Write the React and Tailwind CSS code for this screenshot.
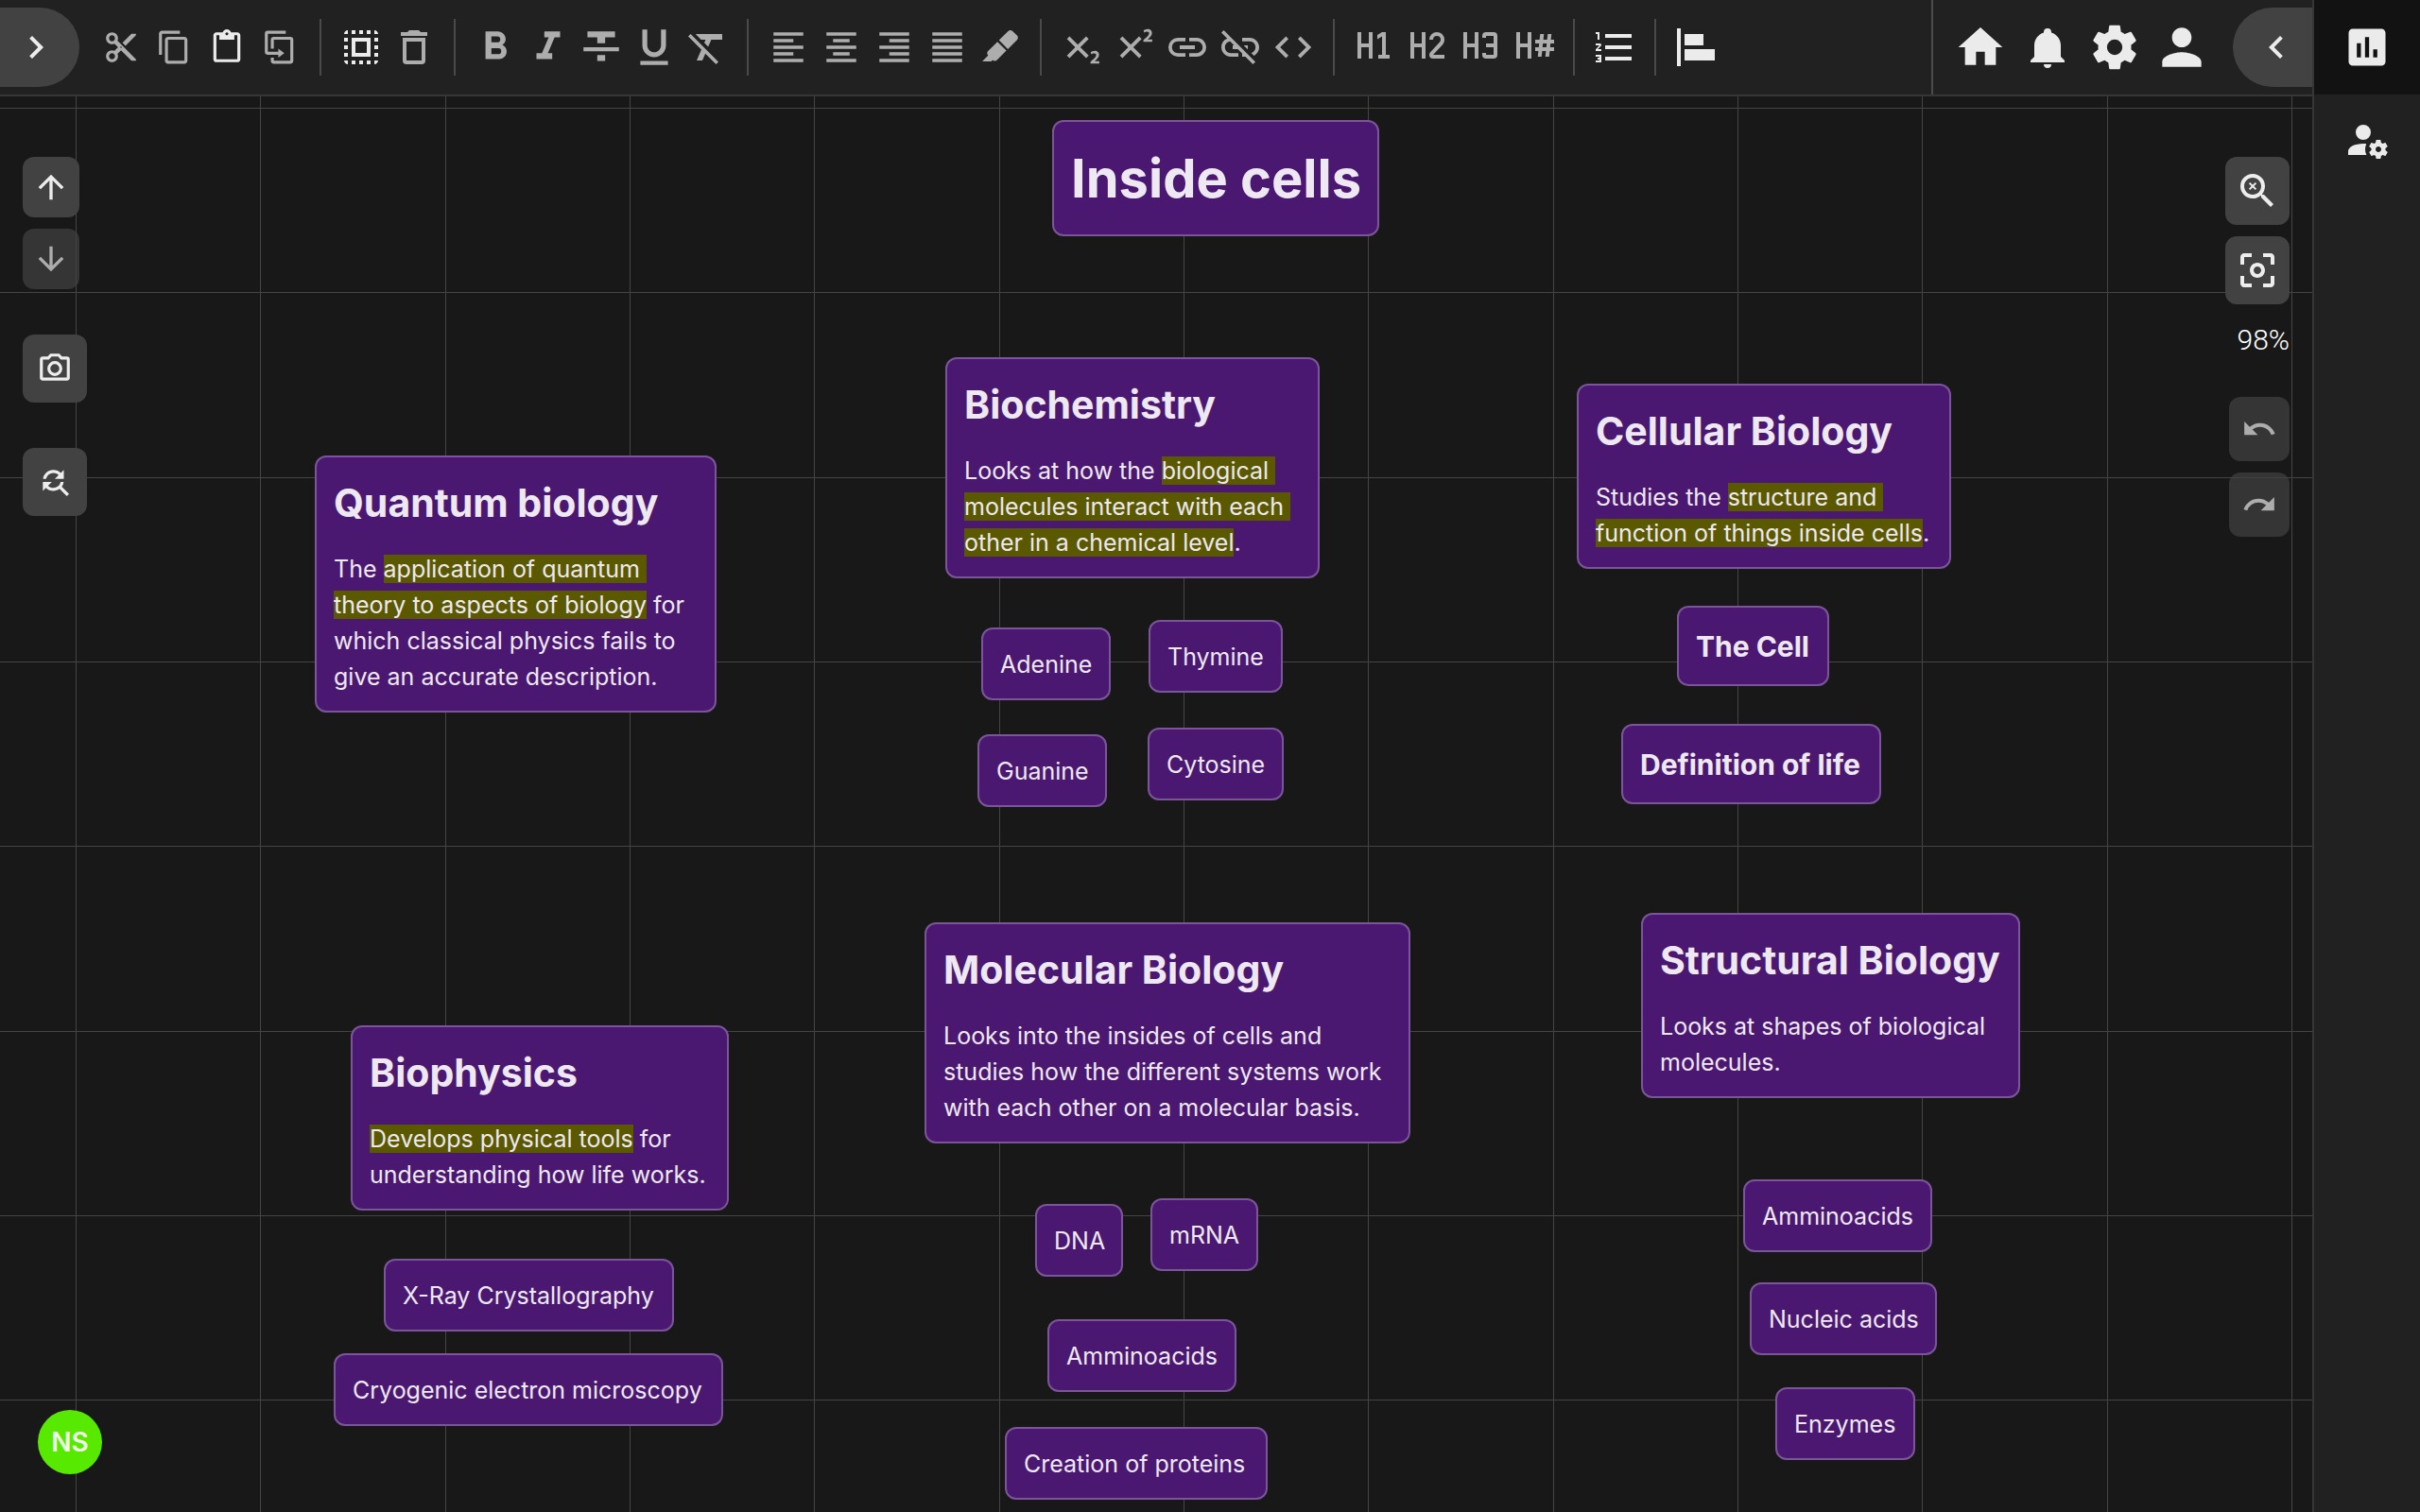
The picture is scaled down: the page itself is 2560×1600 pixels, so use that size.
import React from "react";
import {
  MdArrowDownward,
  MdArrowUpward,
  MdAssessment,
  MdCenterFocusWeak,
  MdContentCopy,
  MdContentCut,
  MdContentPaste,
  MdFindReplace,
  MdFormatAlignCenter,
  MdFormatAlignJustify,
  MdFormatAlignLeft,
  MdFormatAlignRight,
  MdFormatClear,
  MdFormatItalic,
  MdFormatStrikethrough,
  MdFormatUnderlined,
  MdLinkOff,
  MdPerson,
  MdRedo,
  MdSelectAll,
  MdUndo,
} from "react-icons/md";

function glyph(d) {
  return function Glyph({ className }) {
    return (
      <svg viewBox="0 0 24 24" fill="currentColor" className={className} aria-hidden="true">
        <path d={d} />
      </svg>
    );
  };
}

const HEADER_H = "M3,4H5V10H9V4H11V18H9V12H5V18H3V4";
const SCRIPT_X =
  "M16,7.41L11.41,12L16,16.59L14.59,18L10,13.41L5.41,18L4,16.59L8.59,12L4,7.41L5.41,6L10,10.59L14.59,6L16,7.41";
const SCRIPT_TWO =
  "M21.85,21.03H16.97V20.03L17.86,19.23C18.62,18.58 19.18,18.04 19.56,17.6C19.93,17.16 20.12,16.75 20.13,16.36C20.14,16.08 20.05,15.85 19.86,15.66C19.68,15.5 19.39,15.38 19,15.38C18.69,15.38 18.42,15.44 18.16,15.56L17.5,15.94L17.05,14.77C17.32,14.56 17.64,14.38 18.03,14.24C18.42,14.1 18.85,14 19.32,14C20.1,14.04 20.7,14.25 21.1,14.66C21.5,15.07 21.72,15.59 21.72,16.23C21.71,16.79 21.53,17.31 21.18,17.78C20.84,18.25 20.42,18.7 19.91,19.14L19.27,19.66V19.68H21.85V21.03Z";

const ChevronRight = glyph("M8.59,16.58L13.17,12L8.59,7.41L10,6L16,12L10,18L8.59,16.58Z");
const ChevronLeft = glyph("M15.41,16.58L10.83,12L15.41,7.41L14,6L8,12L14,18L15.41,16.58Z");
const Duplicate = glyph(
  "M11,17H4A2,2 0 0,1 2,15V3A2,2 0 0,1 4,1H16V3H4V15H11V13L15,16L11,19V17M19,21V7H8V13H6V7A2,2 0 0,1 8,5H19A2,2 0 0,1 21,7V21A2,2 0 0,1 19,23H8A2,2 0 0,1 6,21V19H8V21H19Z"
);
const Trash = glyph(
  "M6,19A2,2 0 0,0 8,21H16A2,2 0 0,0 18,19V7H6V19M8,9H16V19H8V9M15.5,4L14.5,3H9.5L8.5,4H5V6H19V4H15.5Z"
);
const Bold = glyph(
  "M13.5,15.5H10V12.5H13.5A1.5,1.5 0 0,1 15,14A1.5,1.5 0 0,1 13.5,15.5M10,6.5H13A1.5,1.5 0 0,1 14.5,8A1.5,1.5 0 0,1 13,9.5H10M15.6,10.79C16.57,10.11 17.25,9 17.25,8C17.25,5.74 15.5,4 13.25,4H7V18H14.04C16.14,18 17.75,16.3 17.75,14.21C17.75,12.69 16.89,11.39 15.6,10.79Z"
);
const Marker = glyph(
  "M18.5,1.15C17.97,1.15 17.46,1.34 17.07,1.73L11.26,7.55L16.91,13.2L22.73,7.39C23.5,6.61 23.5,5.35 22.73,4.56L19.89,1.73C19.5,1.34 19,1.15 18.5,1.15M10.3,8.5L4.34,14.46C3.56,15.24 3.56,16.5 4.36,17.31C3.14,18.54 1.9,19.77 0.67,21H6.33L7.19,20.14C7.97,20.9 9.22,20.89 10,20.12L15.95,14.16"
);
const Subscript = glyph(SCRIPT_X + SCRIPT_TWO);
function Superscript({ className }) {
  return (
    <svg viewBox="0 0 24 24" fill="currentColor" className={className} aria-hidden="true">
      <path d={SCRIPT_X} />
      <path d={SCRIPT_TWO} transform="translate(0 -12)" />
    </svg>
  );
}
const Link = glyph(
  "M3.9,12C3.9,10.29 5.29,8.9 7,8.9H11V7H7A5,5 0 0,0 2,12A5,5 0 0,0 7,17H11V15.1H7C5.29,15.1 3.9,13.71 3.9,12M8,13H16V11H8V13M17,7H13V8.9H17C18.71,8.9 20.1,10.29 20.1,12C20.1,13.71 18.71,15.1 17,15.1H13V17H17A5,5 0 0,0 22,12A5,5 0 0,0 17,7Z"
);
const Code = glyph(
  "M14.6,16.6L19.2,12L14.6,7.4L16,6L22,12L16,18L14.6,16.6M9.4,16.6L4.8,12L9.4,7.4L8,6L2,12L8,18L9.4,16.6Z"
);
const Header1 = glyph(HEADER_H + "M14,18V16H16V6.31L13.5,7.75V5.44L16,4H18V16H20V18H14Z");
const Header2 = glyph(
  HEADER_H +
    "M21,18H15A2,2 0 0,1 13,16C13,15.47 13.2,15 13.54,14.64L18.41,9.41C18.78,9.05 19,8.55 19,8A2,2 0 0,0 17,6A2,2 0 0,0 15,8H13A4,4 0 0,1 17,4A4,4 0 0,1 21,8C21,9.1 20.55,10.1 19.83,10.83L15,16H21V18Z"
);
const Header3 = glyph(
  HEADER_H +
    "M15,4H19A2,2 0 0,1 21,6V16A2,2 0 0,1 19,18H15A2,2 0 0,1 13,16V15H15V16H19V12H15V10H19V6H15V7H13V6A2,2 0 0,1 15,4Z"
);
const HeaderPound = glyph(
  HEADER_H +
    "M13,8H15.31L15.63,5H17.63L17.31,8H19.31L19.63,5H21.63L21.31,8H23V10H21.1L20.9,12H23V14H20.69L20.37,17H18.37L18.69,14H16.69L16.37,17H14.37L14.69,14H13V12H14.9L15.1,10H13V8M17.1,10L16.9,12H18.9L19.1,10H17.1Z"
);
const ListNumbered = glyph(
  "M7,13V11H21V13H7M7,19V17H21V19H7M7,7V5H21V7H7M3,8V5H2V4H4V8H3M2,17V16H5V20H2V19H4V18.5H3V17.5H4V17H2M4.25,10A0.75,0.75 0 0,1 5,10.75C5,10.95 4.92,11.14 4.79,11.27L3.12,13H5V14H2V13.08L4,11H2V10H4.25Z"
);
const AlignNodes = glyph("M2,2H4V22H2V2M6,5H16V11H6V5M6,13H22V19H6V13Z");
const Home = glyph("M10,20V14H14V20H19V12H22L12,3L2,12H5V20H10Z");
const Bell = glyph(
  "M21,19V20H3V19L5,17V11C5,7.9 7.03,5.17 10,4.29C10,4.19 10,4.1 10,4A2,2 0 0,1 12,2A2,2 0 0,1 14,4C14,4.1 14,4.19 14,4.29C16.97,5.17 19,7.9 19,11V17L21,19M14,21A2,2 0 0,1 12,23A2,2 0 0,1 10,21"
);
const Cog = glyph(
  "M12,15.5A3.5,3.5 0 0,1 8.5,12A3.5,3.5 0 0,1 12,8.5A3.5,3.5 0 0,1 15.5,12A3.5,3.5 0 0,1 12,15.5M19.43,12.97C19.47,12.65 19.5,12.33 19.5,12C19.5,11.67 19.47,11.34 19.43,11L21.54,9.37C21.73,9.22 21.78,8.95 21.66,8.73L19.66,5.27C19.54,5.05 19.27,4.96 19.05,5.05L16.56,6.05C16.04,5.66 15.5,5.32 14.87,5.07L14.5,2.42C14.46,2.18 14.25,2 14,2H10C9.75,2 9.54,2.18 9.5,2.42L9.13,5.07C8.5,5.32 7.96,5.66 7.44,6.05L4.95,5.05C4.73,4.96 4.46,5.05 4.34,5.27L2.34,8.73C2.21,8.95 2.27,9.22 2.46,9.37L4.57,11C4.53,11.34 4.5,11.67 4.5,12C4.5,12.33 4.53,12.65 4.57,12.97L2.46,14.63C2.27,14.78 2.21,15.05 2.34,15.27L4.34,18.73C4.46,18.95 4.73,19.03 4.95,18.95L7.44,17.94C7.96,18.34 8.5,18.68 9.13,18.93L9.5,21.58C9.54,21.82 9.75,22 10,22H14C14.25,22 14.46,21.82 14.5,21.58L14.87,18.93C15.5,18.67 16.04,18.34 16.56,17.94L19.05,18.95C19.27,19.03 19.54,18.95 19.66,18.73L21.66,15.27C21.78,15.05 21.73,14.78 21.54,14.63L19.43,12.97Z"
);
const AccountCog = glyph(
  "M10 4A4 4 0 0 0 6 8A4 4 0 0 0 10 12A4 4 0 0 0 14 8A4 4 0 0 0 10 4M17 12C16.87 12 16.76 12.09 16.74 12.21L16.55 13.53C16.25 13.66 15.96 13.82 15.7 14L14.46 13.5C14.35 13.5 14.22 13.5 14.15 13.63L13.15 15.36C13.09 15.47 13.11 15.6 13.21 15.68L14.27 16.5C14.25 16.67 14.24 16.83 14.24 17C14.24 17.17 14.25 17.33 14.27 17.5L13.21 18.32C13.12 18.4 13.09 18.53 13.15 18.64L14.15 20.37C14.21 20.5 14.34 20.5 14.46 20.5L15.7 20C15.96 20.18 16.24 20.35 16.55 20.47L16.74 21.79C16.76 21.91 16.86 22 17 22H19C19.11 22 19.22 21.91 19.24 21.79L19.43 20.47C19.73 20.34 20 20.18 20.27 20L21.5 20.5C21.63 20.5 21.76 20.5 21.83 20.37L22.83 18.64C22.89 18.53 22.86 18.4 22.77 18.32L21.7 17.5C21.72 17.33 21.74 17.17 21.74 17C21.74 16.83 21.73 16.67 21.7 16.5L22.76 15.68C22.85 15.6 22.88 15.47 22.82 15.36L21.82 13.63C21.76 13.5 21.63 13.5 21.5 13.5L20.27 14C20 13.82 19.73 13.65 19.42 13.53L19.23 12.21C19.22 12.09 19.11 12 19 12H17M10 14C5.58 14 2 15.79 2 18V20H11.68A7 7 0 0 1 11 17A7 7 0 0 1 11.64 14.09C11.11 14.03 10.56 14 10 14M18 15.5C18.83 15.5 19.5 16.17 19.5 17C19.5 17.83 18.83 18.5 18 18.5C17.16 18.5 16.5 17.83 16.5 17C16.5 16.17 17.17 15.5 18 15.5Z"
);
const Camera = glyph(
  "M20,4H16.83L15,2H9L7.17,4H4A2,2 0 0,0 2,6V18A2,2 0 0,0 4,20H20A2,2 0 0,0 22,18V6A2,2 0 0,0 20,4M20,18H4V6H8.05L9.88,4H14.12L15.95,6H20V18M12,7A5,5 0 0,0 7,12A5,5 0 0,0 12,17A5,5 0 0,0 17,12A5,5 0 0,0 12,7M12,15A3,3 0 0,1 9,12A3,3 0 0,1 12,9A3,3 0 0,1 15,12A3,3 0 0,1 12,15Z"
);
function ZoomReset({ className }) {
  return (
    <svg viewBox="0 0 24 24" fill="currentColor" className={className} aria-hidden="true">
      <path d="M9.5,3A6.5,6.5 0 0,1 16,9.5C16,11.11 15.41,12.59 14.44,13.73L14.71,14H15.5L20.5,19L19,20.5L14,15.5V14.71L13.73,14.44C12.59,15.41 11.11,16 9.5,16A6.5,6.5 0 0,1 3,9.5A6.5,6.5 0 0,1 9.5,3M9.5,5C7,5 5,7 5,9.5C5,12 7,14 9.5,14C12,14 14,12 14,9.5C14,7 12,5 9.5,5Z" />
      <path d="M7.8,7.8L11.2,11.2M11.2,7.8L7.8,11.2" stroke="currentColor" strokeWidth="1" fill="none" />
    </svg>
  );
}

const TOOL_GROUPS = [
  [
    { label: "Cut", Icon: MdContentCut, size: "size-[38px]" },
    { label: "Copy", Icon: MdContentCopy, size: "size-[38px]" },
    { label: "Paste", Icon: MdContentPaste, size: "size-[38px]", active: true },
    { label: "Duplicate", Icon: Duplicate, size: "size-[38px]" },
  ],
  [
    { label: "Select all", Icon: MdSelectAll, size: "size-12", active: true },
    { label: "Delete", Icon: Trash, size: "size-12" },
  ],
  [
    { label: "Bold", Icon: Bold, size: "size-[50px]" },
    { label: "Italic", Icon: MdFormatItalic, size: "size-[50px]" },
    { label: "Strikethrough", Icon: MdFormatStrikethrough, size: "size-[50px]" },
    { label: "Underline", Icon: MdFormatUnderlined, size: "size-[50px]" },
    { label: "Clear formatting", Icon: MdFormatClear, size: "size-12" },
  ],
  [
    { label: "Align left", Icon: MdFormatAlignLeft, size: "size-[42px]" },
    { label: "Align center", Icon: MdFormatAlignCenter, size: "size-[42px]" },
    { label: "Align right", Icon: MdFormatAlignRight, size: "size-[42px]" },
    { label: "Justify", Icon: MdFormatAlignJustify, size: "size-[42px]" },
    { label: "Highlight", Icon: Marker, size: "size-10" },
  ],
  [
    { label: "Subscript", Icon: Subscript, size: "size-[46px]" },
    { label: "Superscript", Icon: Superscript, size: "size-[46px]" },
    { label: "Link", Icon: Link, size: "size-12" },
    { label: "Remove link", Icon: MdLinkOff, size: "size-12" },
    { label: "Code", Icon: Code, size: "size-[46px]" },
  ],
  [
    { label: "Heading 1", Icon: Header1, size: "size-12" },
    { label: "Heading 2", Icon: Header2, size: "size-12" },
    { label: "Heading 3", Icon: Header3, size: "size-12" },
    { label: "Other headings", Icon: HeaderPound, size: "size-12" },
  ],
  [{ label: "Numbered list", Icon: ListNumbered, size: "size-12", active: true }],
  [{ label: "Align nodes", Icon: AlignNodes, size: "size-12", active: true }],
];

const ACCOUNT_TOOLS = [
  { label: "Home", Icon: Home, size: "size-14" },
  { label: "Notifications", Icon: Bell, size: "size-12" },
  { label: "Settings", Icon: Cog, size: "size-14" },
  { label: "Account", Icon: MdPerson, size: "size-[62px]" },
];

/* Highlighted runs are wrapped in [brackets]; line breaks are kept. */
const NODES = [
  { x: 1113, y: 25, w: 346, h1: "Inside cells" },
  {
    x: 333,
    y: 380,
    w: 425,
    h2: "Quantum biology",
    body: "The [application of quantum ]\n[theory to aspects of biology] for\nwhich classical physics fails to\ngive an accurate description.",
  },
  {
    x: 1000,
    y: 276,
    w: 396,
    h2: "Biochemistry",
    body: "Looks at how the [biological ]\n[molecules interact with each ]\n[other in a chemical level].",
  },
  { x: 1038, y: 562, w: 137, body: "Adenine" },
  { x: 1215, y: 554, w: 142, body: "Thymine" },
  { x: 1034, y: 675, w: 137, body: "Guanine" },
  { x: 1214, y: 668, w: 144, body: "Cytosine" },
  {
    x: 1668,
    y: 304,
    w: 396,
    h2: "Cellular Biology",
    body: "Studies the [structure and ]\n[function of things inside cells].",
  },
  { x: 1774, y: 539, w: 161, h3: "The Cell" },
  { x: 1715, y: 664, w: 275, h3: "Definition of life" },
  {
    x: 371,
    y: 983,
    w: 400,
    h2: "Biophysics",
    body: "[Develops physical tools] for\nunderstanding how life works.",
  },
  { x: 406, y: 1230, w: 307, body: "X-Ray Crystallography" },
  { x: 353, y: 1330, w: 412, body: "Cryogenic electron microscopy" },
  {
    x: 978,
    y: 874,
    w: 514,
    h2: "Molecular Biology",
    body: "Looks into the insides of cells and\nstudies how the different systems work\nwith each other on a molecular basis.",
  },
  { x: 1095, y: 1172, w: 93, body: "DNA" },
  { x: 1217, y: 1166, w: 114, body: "mRNA" },
  { x: 1108, y: 1294, w: 200, body: "Amminoacids" },
  { x: 1063, y: 1408, w: 278, body: "Creation of proteins" },
  {
    x: 1736,
    y: 864,
    w: 401,
    h2: "Structural Biology",
    body: "Looks at shapes of biological\nmolecules.",
  },
  { x: 1844, y: 1146, w: 200, body: "Amminoacids" },
  { x: 1851, y: 1255, w: 198, body: "Nucleic acids" },
  { x: 1878, y: 1366, w: 148, body: "Enzymes" },
];

const GRID_COLUMNS = Array.from({ length: 13 }, (_, i) => Math.round(80 + (i * 586) / 3));
const GRID_ROWS = Array.from({ length: 8 }, (_, i) => Math.round(12 + (i * 586) / 3));

function Body({ text }) {
  const parts = text.split(/(\[[^\]]*\])/);
  return (
    <p className="text-[25px] leading-[38px] whitespace-pre">
      {parts.map((part, i) =>
        part.startsWith("[") ? (
          <mark key={i} className="bg-[#5a5900] text-inherit">
            {part.slice(1, -1)}
          </mark>
        ) : (
          part
        )
      )}
    </p>
  );
}

function Node({ node }) {
  return (
    <article
      className="absolute rounded-xl border-2 border-[#7b5599] bg-[#4b1871] px-[18px] pt-[18px] pb-[17px] text-[#eee8f2]"
      style={{ left: node.x, top: node.y, width: node.w }}
    >
      {node.h1 && <h1 className="text-[56px] leading-[84px] font-bold whitespace-nowrap">{node.h1}</h1>}
      {node.h2 && <h2 className="mb-5 text-[41px] leading-[61px] font-bold whitespace-nowrap">{node.h2}</h2>}
      {node.h3 && <h3 className="text-[30px] leading-[46px] font-bold whitespace-nowrap">{node.h3}</h3>}
      {node.body && <Body text={node.body} />}
    </article>
  );
}

function ToolButton({ tool }) {
  const { Icon, label, size, active } = tool;
  return (
    <button
      type="button"
      aria-label={label}
      className={
        active
          ? "flex h-full w-14 items-center justify-center text-[#ebebeb]"
          : "flex h-full w-14 items-center justify-center text-[#adadad]"
      }
    >
      <Icon className={size} />
    </button>
  );
}

function CanvasButton({ label, Icon, box, size, disabled }) {
  return (
    <button
      type="button"
      aria-label={label}
      disabled={disabled}
      className={
        "flex items-center justify-center rounded-xl text-[#ededed] bg-[#424242] disabled:opacity-70 " + box
      }
    >
      <Icon className={size} />
    </button>
  );
}

export default function App() {
  return (
    <div className="flex h-screen overflow-hidden bg-[#181818] font-[Inter,sans-serif]">
      <main className="flex min-w-0 flex-1 flex-col">
        <header className="flex h-[102px] shrink-0 items-center border-b-2 border-[#363636] bg-[#212121]">
          <button
            type="button"
            aria-label="Open menu"
            className="flex h-[84px] w-[84px] shrink-0 items-center justify-center rounded-r-full bg-[#424242] pr-2 text-[#ededed]"
          >
            <ChevronRight className="size-12" />
          </button>
          <div role="toolbar" className="ml-4 flex h-full items-center">
            {TOOL_GROUPS.map((group, i) => (
              <React.Fragment key={group[0].label}>
                {i > 0 && <div className="mx-[14px] h-[60px] w-[2px] bg-[#4a4a4a]" />}
                <div className="flex h-full">
                  {group.map((tool) => (
                    <ToolButton key={tool.label} tool={tool} />
                  ))}
                </div>
              </React.Fragment>
            ))}
          </div>
          <nav className="ml-auto flex h-full items-center border-l-2 border-[#4a4a4a] pl-[14px]">
            {ACCOUNT_TOOLS.map(({ label, Icon, size }) => (
              <button
                key={label}
                type="button"
                aria-label={label}
                className="flex h-full w-[71px] items-center justify-center text-[#ebebeb]"
              >
                <Icon className={"shrink-0 " + size} />
              </button>
            ))}
          </nav>
          <button
            type="button"
            aria-label="Collapse sidebar"
            className="ml-[19px] flex h-[84px] w-[84px] shrink-0 items-center justify-center rounded-l-full bg-[#424242] pl-2 text-[#ededed]"
          >
            <ChevronLeft className="size-12" />
          </button>
        </header>

        <section className="relative flex-1 overflow-hidden">
          <svg className="absolute inset-0 size-full" aria-hidden="true">
            {GRID_COLUMNS.map((x) => (
              <rect key={x} x={x} y="0" width="1" height="100%" fill="#444444" />
            ))}
            {GRID_ROWS.map((y) => (
              <rect key={y} x="0" y={y} width="100%" height="1" fill="#444444" />
            ))}
          </svg>

          {NODES.map((node, i) => (
            <Node key={i} node={node} />
          ))}

          <div className="absolute top-16 left-6 flex flex-col items-start">
            <CanvasButton label="Previous level" Icon={MdArrowUpward} box="h-16 w-[60px]" size="size-10" />
            <CanvasButton label="Next level" Icon={MdArrowDownward} box="mt-3 h-16 w-[60px]" size="size-10" disabled />
            <CanvasButton label="Take snapshot" Icon={Camera} box="mt-12 h-[72px] w-[68px]" size="size-[38px]" />
            <CanvasButton label="Find and replace" Icon={MdFindReplace} box="mt-12 h-[72px] w-[68px]" size="size-[38px]" />
          </div>

          <div className="absolute top-16 right-6 flex flex-col items-end">
            <CanvasButton label="Reset zoom" Icon={ZoomReset} box="h-[72px] w-[68px]" size="size-12" />
            <CanvasButton label="Fit to view" Icon={MdCenterFocusWeak} box="mt-3 h-[72px] w-[68px]" size="size-12" />
            <output className="mt-5 mb-[42px] block font-[Roboto,sans-serif] text-[30px] leading-9 font-light text-white">
              98%
            </output>
            <CanvasButton label="Undo" Icon={MdUndo} box="h-[68px] w-16" size="size-[38px]" disabled />
            <CanvasButton label="Redo" Icon={MdRedo} box="mt-3 h-[68px] w-16" size="size-[38px]" disabled />
          </div>

          <button
            type="button"
            aria-label="NS, signed-in user"
            className="absolute bottom-10 left-10 flex size-[68px] items-center justify-center rounded-full bg-[#58e900] text-[28px] font-semibold text-[#f0fde8]"
          >
            NS
          </button>
        </section>
      </main>

      <aside className="flex w-[114px] shrink-0 flex-col border-l-2 border-[#363636] bg-[#212121] text-[#ebebeb]">
        <button type="button" aria-label="Statistics" className="flex h-[100px] items-center justify-center bg-[#121212]">
          <MdAssessment className="size-[52px]" />
        </button>
        <button type="button" aria-label="User settings" className="flex h-24 items-center justify-center">
          <AccountCog className="size-12" />
        </button>
      </aside>
    </div>
  );
}
